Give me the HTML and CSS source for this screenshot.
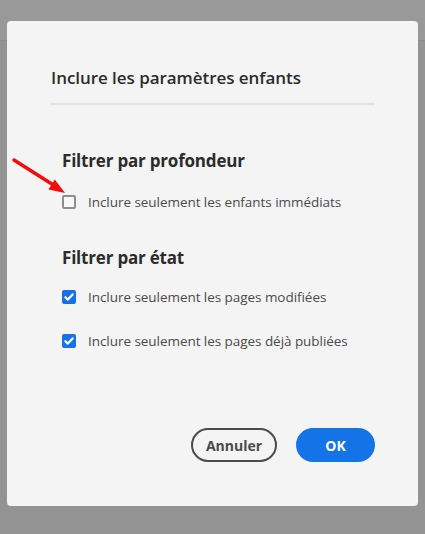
FILE: index.html
```
<!DOCTYPE html>
<html lang="fr">
<head>
<meta charset="utf-8">
<link rel="stylesheet" href="styles.css">
</head>
<body>
<div class="page">
  <div class="page-header"></div>
</div>
<div class="overlay">
  <div class="dialog">
    <h1 class="dialog-title">Inclure les paramètres enfants</h1>
    <div class="divider"></div>
    <div class="content">
      <section class="group">
        <h2 class="group-title">Filtrer par profondeur</h2>
        <label class="check">
          <span class="box"></span>
          <span class="check-label">Inclure seulement les enfants immédiats</span>
        </label>
      </section>
      <section class="group group-state">
        <h2 class="group-title">Filtrer par état</h2>
        <label class="check">
          <span class="box checked"><svg viewBox="0 0 14 14" width="14" height="14"><path d="M3.4 7.2 L5.9 9.6 L10.6 4.4" fill="none" stroke="#fff" stroke-width="2.2" stroke-linecap="round" stroke-linejoin="round"/></svg></span>
          <span class="check-label">Inclure seulement les pages modifiées</span>
        </label>
        <label class="check">
          <span class="box checked"><svg viewBox="0 0 14 14" width="14" height="14"><path d="M3.4 7.2 L5.9 9.6 L10.6 4.4" fill="none" stroke="#fff" stroke-width="2.2" stroke-linecap="round" stroke-linejoin="round"/></svg></span>
          <span class="check-label">Inclure seulement les pages déjà publiées</span>
        </label>
      </section>
    </div>
    <div class="actions">
      <button class="btn btn-secondary">Annuler</button>
      <button class="btn btn-primary">OK</button>
    </div>
  </div>
  <svg class="arrow" width="60" height="50" viewBox="0 0 60 50">
    <line x1="3" y1="5" x2="44" y2="31" stroke="#f40c0c" stroke-width="3.5" stroke-linecap="round"/>
    <polygon points="54,38 37.4,34.4 43.8,24.4" fill="#f40c0c"/>
  </svg>
</div>
</body>
</html>
```
FILE: styles.css
```
* { box-sizing: border-box; }
html, body { margin: 0; padding: 0; }
body {
  width: 425px;
  height: 534px;
  background: #939393;
  font-family: "Open Sans", "Noto Sans", sans-serif;
  overflow: hidden;
  position: relative;
}
.page-header {
  height: 41px;
  background: #999999;
  border-bottom: 1px solid #8d8d8d;
}
.overlay {
  position: absolute;
  inset: 0;
}
.dialog {
  position: absolute;
  left: 7px;
  top: 21px;
  width: 411px;
  height: 485px;
  background: #f4f4f4;
  border-radius: 4px;
  padding: 0 43px 0 44px;
  display: flex;
  flex-direction: column;
}
.dialog-title {
  margin: 45px 0 0 0;
  font-size: 17px;
  line-height: 24px;
  font-weight: 600;
  color: #2c2c2c;
  letter-spacing: -0.05px;
}
.divider {
  margin-top: 13px;
  height: 2px;
  background: #e1e1e1;
}
.content {
  padding-left: 11px;
  padding-top: 44px;
}
.group-title {
  margin: 0;
  font-size: 17px;
  line-height: 24px;
  font-weight: 700;
  color: #2c2c2c;
  letter-spacing: -0.2px;
}
.group-state { margin-top: 34px; }
.check {
  display: flex;
  align-items: center;
  gap: 12px;
  height: 20px;
  margin-top: 19px;
}
.group-state .check + .check { margin-top: 24px; }
.group-state .group-title + .check { margin-top: 17px; }
.box {
  width: 14px;
  height: 14px;
  border: 2px solid #8e8e8e;
  border-radius: 2px;
  background: #f8f8f8;
  flex: none;
  display: flex;
  align-items: center;
  justify-content: center;
}
.box.checked {
  background: #1473e6;
  border: none;
}
.check-label {
  font-size: 13.5px;
  color: #4b4b4b;
  letter-spacing: -0.05px;
}
.actions {
  margin-top: auto;
  margin-bottom: 44px;
  display: flex;
  justify-content: flex-end;
  gap: 19px;
}
.btn {
  height: 34px;
  border-radius: 17px;
  font-family: inherit;
  font-size: 14px;
  font-weight: 700;
  padding: 0;
}
.btn-secondary {
  width: 86px;
  border: 2px solid #4b4b4b;
  background: transparent;
  color: #4b4b4b;
}
.btn-primary {
  width: 79px;
  border: none;
  background: #1473e6;
  color: #ffffff;
}
.arrow {
  position: absolute;
  left: 11px;
  top: 155px;
}
```
